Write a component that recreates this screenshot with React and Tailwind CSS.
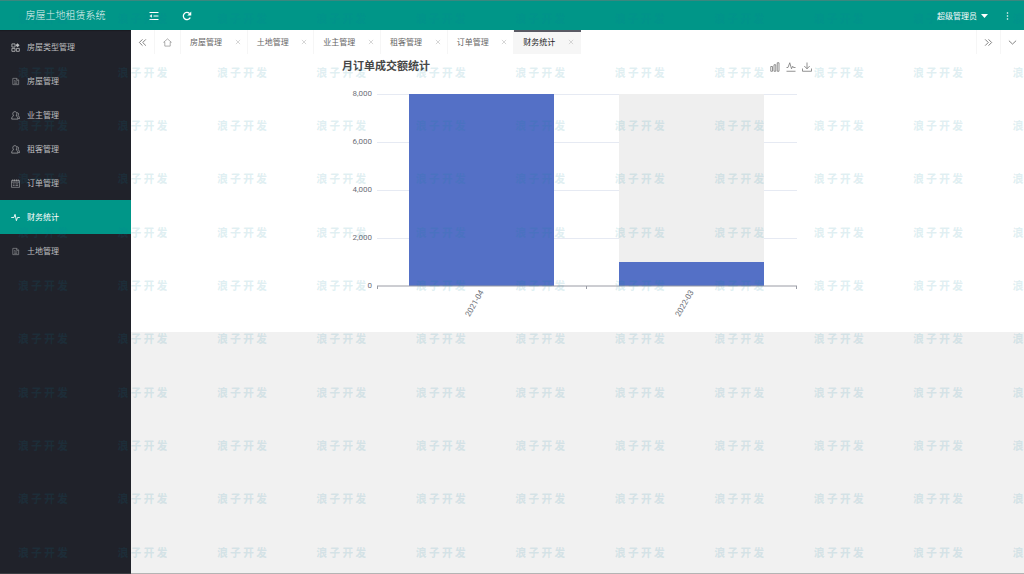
import React from "react";

const WATERMARK = ["浪", "子", "开", "发"];

function Icon({ className = "", size = 10, children, sw = 1 }) {
  return (
    <svg
      className={className}
      width={size}
      height={size}
      viewBox="0 0 20 20"
      fill="none"
      stroke="currentColor"
      strokeWidth={sw}
      aria-hidden="true"
    >
      {children}
    </svg>
  );
}

const TypeIcon = () => (
  <Icon size={9} sw={1.8}>
    <path d="M2 2h7v7H2zM2 12h7v6.500H2zM12 12h6.500v6.500H12z" />
    <path d="M14.500 0.500l4.500 4.500-4.500 4.500-4.500-4.500z" fill="currentColor" stroke="none" />
  </Icon>
);
const FileIcon = () => (
  <Icon size={9} sw={1.8} className="opacity-60">
    <path d="M4 3h9l4 4v10H4zM7 8h3M7 11h7M7 14h7M12.500 3v4.500H17" />
  </Icon>
);
const UserIcon = () => (
  <Icon size={9} sw={1.8} className="opacity-80">
    <path d="M8.500 1.500c3 0 4.500 2 4.500 4.500 0 2-1 3-1.500 5 2 1 4 2 4 7H1.500c0-5 2-6 4-7C5 9 4 8 4 6c0-2.500 1.500-4.500 4.500-4.500zM14 3.500c3 .5 3.500 4 1.500 7 2 1 3.500 2.500 3.500 6.500H16" />
  </Icon>
);
const OrderIcon = () => (
  <Icon size={9} sw={1.5} className="opacity-80">
    <path d="M1 3.500h18v15H1zM1 7h18M4 11h4M4 14.500h4M10 11h6M10 14.500h6" />
    <path d="M4 1v4M8 1v4M12 1v4M16 1v4" strokeWidth="2" />
  </Icon>
);
const PulseIcon = () => (
  <Icon size={9} sw={2}>
    <path d="M0.500 10h6l2.500-7 3 14 2.500-7h5" />
  </Icon>
);

const MENU = [
  { label: "房屋类型管理", icon: TypeIcon },
  { label: "房屋管理", icon: FileIcon },
  { label: "业主管理", icon: UserIcon },
  { label: "租客管理", icon: UserIcon },
  { label: "订单管理", icon: OrderIcon },
  { label: "财务统计", icon: PulseIcon, active: true },
  { label: "土地管理", icon: FileIcon },
];

const TABS = ["房屋管理", "土地管理", "业主管理", "租客管理", "订单管理", "财务统计"];

function Sidebar() {
  return (
    <aside className="flex w-[131px] shrink-0 flex-col border-b border-[#3a3d42] bg-[#20222a]">
      <h1 className="flex h-[30px] items-center justify-center border-t border-[#3b877f] bg-[#009688] text-[10px] font-light text-[#e6f4f2] shadow-[0_1px_1px_rgba(0,0,0,0.2)]">
        房屋土地租赁系统
      </h1>
      <nav className="flex flex-col">
        {MENU.map(({ label, icon: Glyph, active }) => (
          <a
            key={label}
            href="#"
            aria-current={active ? "page" : undefined}
            className={
              active
                ? "flex h-[34px] items-center gap-[7px] bg-[#009688] pl-[11px] text-white"
                : "flex h-[34px] items-center gap-[7px] pl-[11px] text-[#bcbdbf]"
            }
          >
            <Glyph />
            <span>{label}</span>
          </a>
        ))}
      </nav>
    </aside>
  );
}

function TopBar() {
  return (
    <header className="flex h-[30px] items-center border-t border-[#3b877f] bg-[#009688] text-white">
      <button aria-label="收起菜单" className="ml-[18px]">
        <Icon sw={2.4}>
          <path d="M1 3h18M9 10h10M1 17h18" />
          <path d="M6 6.500v7L1 10z" fill="currentColor" stroke="none" />
        </Icon>
      </button>
      <button aria-label="刷新" className="ml-[23px]">
        <Icon sw={2.6}>
          <path d="M16.500 13a7.200 7.200 0 1 1-1.500-8" />
          <path d="M18.500 1v8h-8z" fill="currentColor" stroke="none" />
        </Icon>
      </button>
      <div className="grow" />
      <button className="flex items-center gap-[4px]">
        <span>超级管理员</span>
        <svg width="7" height="4" viewBox="0 0 7 4" fill="currentColor" aria-hidden="true">
          <path d="M0 0h7L3.500 4z" />
        </svg>
      </button>
      <button aria-label="更多" className="mr-[12px] ml-[14px]">
        <svg width="10" height="10" viewBox="0 0 10 10" fill="currentColor" aria-hidden="true">
          <circle cx="5.500" cy="2" r="0.800" />
          <circle cx="5.500" cy="5" r="0.800" />
          <circle cx="5.500" cy="8" r="0.800" />
        </svg>
      </button>
    </header>
  );
}

function TabBar() {
  return (
    <div className="flex h-[24px] items-stretch bg-white text-[#666]">
      <button
        aria-label="向左"
        className="flex w-[24px] items-center justify-center border-r border-[#f6f6f6]"
      >
        <Icon size={9} sw={1.8}>
          <path d="M10 3l-7 7 7 7M17.500 3l-7 7 7 7" />
        </Icon>
      </button>
      <button
        aria-label="主页"
        className="flex w-[26px] items-center justify-center border-r border-[#f6f6f6] text-[#888]"
      >
        <Icon size={9} sw={1.5}>
          <path d="M1.500 9.500L10 2l8.500 7.500H16V18H4V9.500z" />
        </Icon>
      </button>
      <div className="grid w-[400px] grid-cols-6">
        {TABS.map((label, i) => {
          const active = i === TABS.length - 1;
          return (
            <div
              key={label}
              className={
                active
                  ? "flex items-center justify-between border-t-2 border-[#5a5a64] bg-[#f6f6f6] px-[7px] pb-[2px] pl-[9px] text-[#222]"
                  : "flex items-center justify-between border-r border-[#f6f6f6] pr-[6px] pl-[9px]"
              }
            >
              <a href="#">{label}</a>
              <button aria-label={"关闭" + label} className="text-[#c6c6c6]">
                <Icon size={6} sw={2.4}>
                  <path d="M3 3l14 14M17 3L3 17" />
                </Icon>
              </button>
            </div>
          );
        })}
      </div>
      <div className="grow" />
      <button
        aria-label="向右"
        className="flex w-[24px] items-center justify-center border-l border-[#f6f6f6]"
      >
        <Icon size={9} sw={1.8}>
          <path d="M10 3l7 7-7 7M2.500 3l7 7-7 7" />
        </Icon>
      </button>
      <button
        aria-label="标签操作"
        className="flex w-[24px] items-center justify-center border-l border-[#f6f6f6]"
      >
        <Icon size={9} sw={1.8}>
          <path d="M2 6l8 7.500L18 6" />
        </Icon>
      </button>
    </div>
  );
}

const DATA = [
  { month: "2021-04", value: 8000 },
  { month: "2022-03", value: 1000 },
];
const TICKS = [0, 2000, 4000, 6000, 8000];
const LEFT = 35;
const WIDTH = 420;
const BASE = 208;
const HEIGHT = 192;

const yOf = (v) => BASE - (v / 8000) * HEIGHT;

function BarChart() {
  const band = WIDTH / DATA.length;
  const barWidth = 145;
  return (
    <svg
      width="471"
      height="254"
      viewBox="0 0 471 254"
      role="img"
      aria-label="月订单成交额统计"
      className="block font-[Roboto,sans-serif] text-[8px]"
    >
      {TICKS.map((t) => (
        <g key={t}>
          {t > 0 && (
            <path d={`M${LEFT} ${yOf(t) + 0.5}h${WIDTH}`} stroke="#e6eaf3" />
          )}
          <text x={LEFT - 5} y={yOf(t) + 2} textAnchor="end" fill="#6e7079">
            {t.toLocaleString("en-US")}
          </text>
        </g>
      ))}
      {DATA.map(({ month, value }, i) => {
        const center = LEFT + band * (i + 0.5);
        const x = center - barWidth / 2 - 0.5;
        return (
          <g key={month}>
            <rect x={x} y={yOf(8000)} width={barWidth} height={HEIGHT} fill="#efefef" />
            <rect x={x} y={yOf(value)} width={barWidth} height={BASE - yOf(value)} fill="#5470c6" />
            <text
              textAnchor="end"
              fill="#6e7079"
              transform={`translate(${center + 2} ${BASE + 6}) rotate(-60)`}
            >
              {month}
            </text>
          </g>
        );
      })}
      <path
        d={`M${LEFT} ${BASE}h${WIDTH}M${LEFT + 0.5} ${BASE}v3M${LEFT + band - 0.5} ${BASE}v3M${LEFT + WIDTH - 0.5} ${BASE}v3`}
        stroke="#9a9ca5"
        fill="none"
      />
    </svg>
  );
}

function StatsCard() {
  return (
    <section className="flex justify-center bg-white">
      <div className="w-[471px]">
        <div className="flex h-[24px] items-center justify-between">
          <h2 className="text-[11px] font-bold text-[#464646]">月订单成交额统计</h2>
          <div className="flex gap-[6px] pt-[2px] pr-[1px] text-[#777]">
            <button aria-label="切换为柱状图">
              <Icon sw={1.6}>
                <path d="M1.500 9h3.500v9.500H1.500zM8 5.500h3.500v13H8zM14.500 1.500H18v17h-3.500z" />
              </Icon>
            </button>
            <button aria-label="切换为折线图">
              <Icon sw={1.6}>
                <path d="M1 11h3l3.500-9.500 3.500 12 2.500-5 1.500 2.500H19M1 18.500h18" />
              </Icon>
            </button>
            <button aria-label="保存为图片">
              <Icon sw={1.6}>
                <path d="M10 1v12.500M4.500 8l5.500 5.500L15.500 8M1 13v5.500h18V13" />
              </Icon>
            </button>
          </div>
        </div>
        <BarChart />
      </div>
    </section>
  );
}

function Watermark() {
  return (
    <div aria-hidden="true" className="pointer-events-none absolute inset-0 overflow-hidden">
      <div className="absolute -top-[8px] left-0 grid h-[587px] w-[1094px] grid-cols-11 grid-rows-11 items-center">
        {Array.from({ length: 121 }, (_, i) => (
          <span
            key={i}
            className="flex gap-[2px] pl-[18px] text-[11px] leading-none font-black text-[#0a809a]/12"
          >
            {WATERMARK.map((char) => (
              <span key={char}>{char}</span>
            ))}
          </span>
        ))}
      </div>
    </div>
  );
}

export default function App() {
  return (
    <div className="relative flex min-h-screen font-['Open_Sans','Noto_Sans_CJK_SC',sans-serif] text-[8px]">
      <Sidebar />
      <div className="flex min-w-0 flex-1 flex-col border-b border-[#b4b4b4] bg-[#f1f1f1]">
        <TopBar />
        <TabBar />
        <main>
          <StatsCard />
        </main>
      </div>
      <Watermark />
    </div>
  );
}
